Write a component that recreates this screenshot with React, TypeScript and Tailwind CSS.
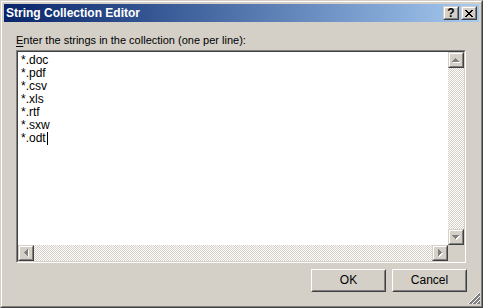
import React from "react";

function Raised({ className = "", children }: { className?: string; children?: React.ReactNode }) {
  return (
    <div className={`border border-t-[#d4d0c8] border-l-[#d4d0c8] border-b-[#404040] border-r-[#404040] ${className}`}>
      <div className="w-full h-full border border-t-white border-l-white border-b-[#808080] border-r-[#808080] bg-[#d4d0c8] flex items-center justify-center">
        {children}
      </div>
    </div>
  );
}

function Arrow({ dir }: { dir: "up" | "down" | "left" | "right" }) {
  const rows = [
    [3, 1],
    [2, 3],
    [1, 5],
    [0, 7],
  ];
  const vertical = dir === "up" || dir === "down";
  const w = vertical ? 8 : 5;
  const h = vertical ? 5 : 8;
  const rects = (dx: number, dy: number, fill: string) =>
    rows.map(([o, len], i) => {
      const r = dir === "up" || dir === "left" ? i : 3 - i;
      if (vertical) return <rect key={fill + i} x={o + dx} y={r + dy} width={len} height={1} fill={fill} />;
      return <rect key={fill + i} x={r + dx} y={o + dy} width={1} height={len} fill={fill} />;
    });
  return (
    <svg width={w} height={h} viewBox={`0 0 ${w} ${h}`} shapeRendering="crispEdges">
      {rects(1, 1, "#ffffff")}
      {rects(0, 0, "#808080")}
    </svg>
  );
}

function PushButton({ label }: { label: string }) {
  return (
    <div className="w-[75px] h-[23px] border border-t-white border-l-white border-b-[#404040] border-r-[#404040]">
      <div className="w-full h-full border border-t-[#d4d0c8] border-l-[#d4d0c8] border-b-[#808080] border-r-[#808080] flex items-center justify-center text-[12px] leading-[13px] text-black">
        {label}
      </div>
    </div>
  );
}

const track =
  "bg-[repeating-conic-gradient(#d4d0c8_0_25%,#ffffff_0_50%)] bg-[length:2px_2px]";

export default function App() {
  const lines = ["*.doc", "*.pdf", "*.csv", "*.xls", "*.rtf", "*.sxw"];
  return (
    <div className="w-[483px] h-[308px] border border-t-[#d4d0c8] border-l-[#d4d0c8] border-b-[#404040] border-r-[#404040] font-['Liberation_Sans',Arial,sans-serif]">
      <div className="relative h-full border border-t-white border-l-white border-b-[#808080] border-r-[#808080] bg-[#d4d0c8] p-[2px] flex flex-col">
        {/* Title bar */}
        <div className="h-[18px] flex items-center bg-linear-to-r from-[#0a246a] to-[#a6caf0] pl-[2px] pr-[2px]">
          <div className="flex-1 text-white font-bold text-[12px] leading-[14px]">String Collection Editor</div>
          <div className="flex items-center gap-[2px]">
            <Raised className="w-[16px] h-[14px]">
              <span className="text-[12px] leading-[12px] font-bold text-black">?</span>
            </Raised>
            <Raised className="w-[16px] h-[14px]">
              <svg width="8" height="7" viewBox="0 0 8 7" shapeRendering="crispEdges">
                <path d="M0 0h2v1h-2zM6 0h2v1h-2zM1 1h2v1h-2zM5 1h2v1h-2zM2 2h4v1h-4zM3 3h2v1h-2zM2 4h4v1h-4zM1 5h2v1h-2zM5 5h2v1h-2zM0 6h2v1h-2zM6 6h2v1h-2z" fill="#000" />
              </svg>
            </Raised>
          </div>
        </div>

        {/* Body */}
        <div className="flex-1 flex flex-col px-[12px] pt-[12px]">
          <div className="text-[11px] leading-[13px] text-black">
            <span className="underline underline-offset-[2px]">E</span>nter the strings in the collection (one per line):
          </div>
          <div className="mt-[3px] w-[450px] h-[213px] border border-t-[#808080] border-l-[#808080] border-b-white border-r-white">
            <div className="w-full h-full border border-t-[#404040] border-l-[#404040] border-b-[#d4d0c8] border-r-[#d4d0c8] bg-white grid grid-cols-[1fr_16px] grid-rows-[1fr_16px]">
              <div className="pl-[3px] pt-[2px] text-[12px] leading-[13px] text-black">
                {lines.map((l) => (
                  <div key={l}>{l}</div>
                ))}
                <div className="flex items-center">
                  <span>*.odt</span>
                  <span className="inline-block w-[1px] h-[13px] bg-black ml-[1px]" />
                </div>
              </div>
              <div className={`flex flex-col ${track}`}>
                <Raised className="w-[16px] h-[16px]">
                  <Arrow dir="up" />
                </Raised>
                <div className="flex-1" />
                <Raised className="w-[16px] h-[16px]">
                  <Arrow dir="down" />
                </Raised>
              </div>
              <div className={`flex ${track}`}>
                <Raised className="w-[16px] h-[16px]">
                  <Arrow dir="left" />
                </Raised>
                <div className="flex-1" />
                <Raised className="w-[16px] h-[16px]">
                  <Arrow dir="right" />
                </Raised>
              </div>
              <div className="bg-[#d4d0c8]" />
            </div>
          </div>
          <div className="mt-[6px] flex justify-end gap-[6px]">
            <PushButton label="OK" />
            <PushButton label="Cancel" />
          </div>
        </div>

        {/* Size grip */}
        <svg className="absolute right-[1px] bottom-[2px]" width="12" height="12" viewBox="0 0 12 12" shapeRendering="crispEdges">
          {[0, 4, 8].map((o) => (
            <g key={o}>
              <line x1={12} y1={o + 0.5} x2={o + 0.5} y2={12} stroke="#ffffff" strokeWidth={1} />
              <line x1={12} y1={o + 1.5} x2={o + 1.5} y2={12} stroke="#808080" strokeWidth={1} />
              <line x1={12} y1={o + 2.5} x2={o + 2.5} y2={12} stroke="#808080" strokeWidth={1} />
            </g>
          ))}
        </svg>
      </div>
    </div>
  );
}
